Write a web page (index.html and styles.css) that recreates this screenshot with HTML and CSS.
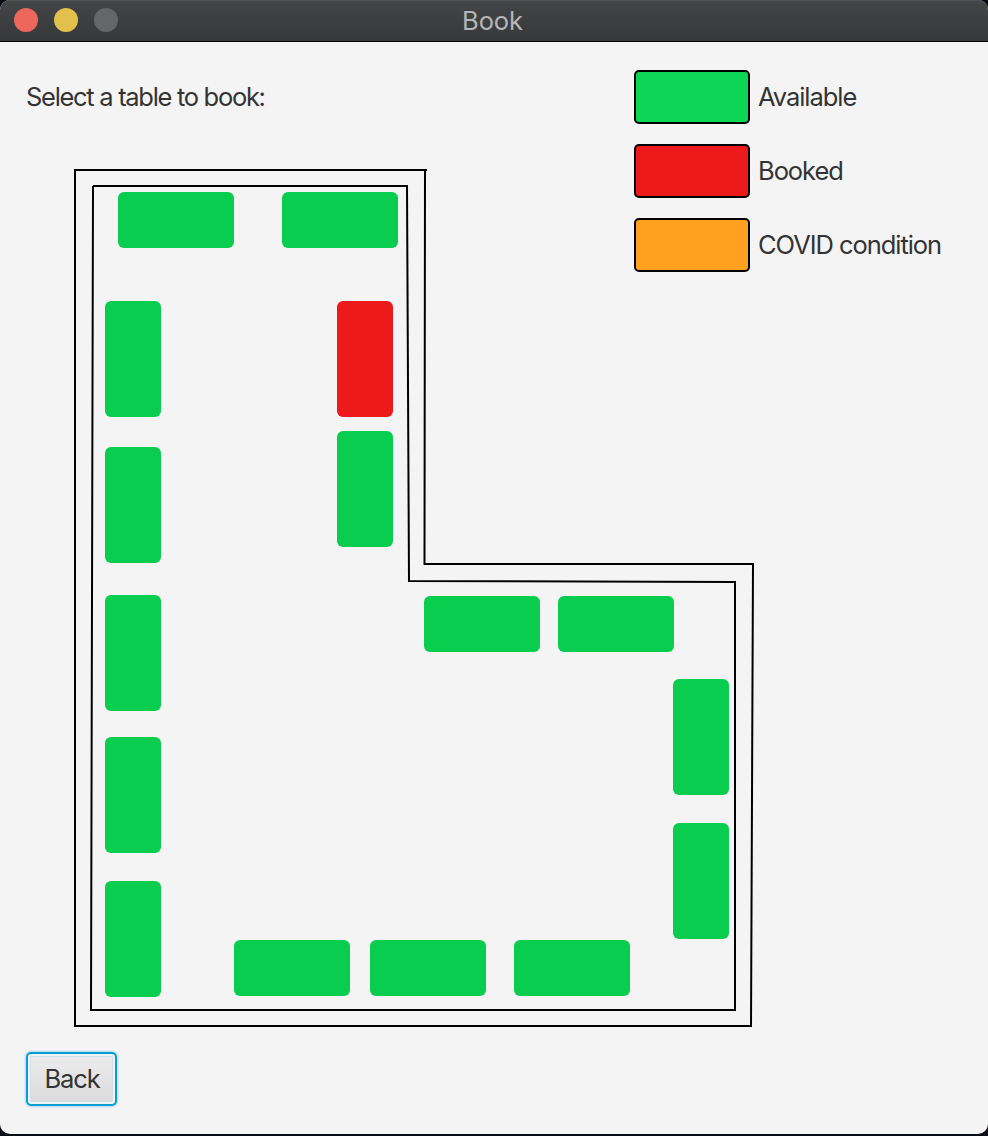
FILE: index.html
```html
<!DOCTYPE html>
<html lang="en">
<head>
<meta charset="utf-8">
<title>Book</title>
<link rel="stylesheet" href="styles.css">
</head>
<body>
<div class="window">
  <header class="titlebar">
    <div class="controls"><span class="dot close"></span><span class="dot minimize"></span><span class="dot zoom"></span></div>
    <h1 class="title">Book</h1>
  </header>
  <main class="content">
    <div class="top">
      <p class="prompt">Select a table to book:</p>
      <ul class="legend">
        <li><span class="swatch available"></span><span class="label">Available</span></li>
        <li><span class="swatch booked"></span><span class="label">Booked</span></li>
        <li><span class="swatch covid"></span><span class="label">COVID condition</span></li>
      </ul>
    </div>
    <svg class="plan" viewBox="70 160 690 872" width="690" height="872">
      <g class="walls">
        <path d="M75 170H427M425 170L424.500 564L753 564L751 1027M752 1026H75M75 1027V169"/>
        <path d="M93 186H407L409 581L735 582V1010H91L93 186"/>
      </g>
      <g class="tables">
        <rect x="118" y="192" width="116" height="56" rx="6"/>
        <rect x="282" y="192" width="116" height="56" rx="6"/>
        <rect x="105" y="301" width="56" height="116" rx="6"/>
        <rect class="taken" x="337" y="301" width="56" height="116" rx="6"/>
        <rect x="337" y="431" width="56" height="116" rx="6"/>
        <rect x="105" y="447" width="56" height="116" rx="6"/>
        <rect x="105" y="595" width="56" height="116" rx="6"/>
        <rect x="424" y="596" width="116" height="56" rx="6"/>
        <rect x="558" y="596" width="116" height="56" rx="6"/>
        <rect x="673" y="679" width="56" height="116" rx="6"/>
        <rect x="105" y="737" width="56" height="116" rx="6"/>
        <rect x="673" y="823" width="56" height="116" rx="6"/>
        <rect x="105" y="881" width="56" height="116" rx="6"/>
        <rect x="234" y="940" width="116" height="56" rx="6"/>
        <rect x="370" y="940" width="116" height="56" rx="6"/>
        <rect x="514" y="940" width="116" height="56" rx="6"/>
      </g>
    </svg>
    <button class="back" type="button"><span>Back</span></button>
  </main>
</div>
</body>
</html>
```

FILE: styles.css
```css
* { box-sizing: border-box; }
body {
  margin: 0;
  background: #0b0d14;
  font-family: Inter, "Liberation Sans", sans-serif;
  font-size: 25.5px;
  color: #333;
}
.window {
  height: 1134px;
  border-radius: 10px;
  overflow: hidden;
  background: #f4f4f4;
}
.titlebar {
  display: grid;
  grid-template-columns: 1fr auto 1fr;
  align-items: center;
  height: 42px;
  padding: 0 3px 1px 14px;
  border-bottom: 1px solid #000;
  background: linear-gradient(#444547, #373839);
  box-shadow: inset 0 1px #505153;
}
.controls { display: flex; gap: 16px; }
.dot { width: 24px; height: 24px; border-radius: 50%; }
.close { background: #ee675c; }
.minimize { background: #e1c04c; }
.zoom { background: #656668; }
.title {
  margin: 0 0 0 -14px;
  padding-top: 2px;
  font-size: 25.5px;
  font-weight: 400;
  line-height: 38px;
  letter-spacing: -0.1px;
  color: #b5b6b7;
}
.content { display: flex; flex-direction: column; align-items: flex-start; }
.top {
  display: flex;
  justify-content: space-between;
  width: 100%;
  height: 118px;
  padding: 28px 0 0 26px;
}
.prompt { margin: 0; line-height: 54px; letter-spacing: -1.3px; }
.legend {
  display: flex;
  flex-direction: column;
  gap: 20px;
  width: 354px;
  margin: 0;
  padding: 0;
  list-style: none;
}
.legend li { display: flex; align-items: center; gap: 8px; height: 54px; white-space: nowrap; letter-spacing: -1.05px; }
.label { padding-bottom: 2px; }
.swatch { width: 116px; height: 54px; border: 2px solid #000; border-radius: 5px; flex: none; }
.available { background: #0dd656; }
.booked { background: #ec1a1a; }
.covid { background: #ffa01f; }
.plan { display: block; margin-left: 70px; }
.walls { fill: none; stroke: #000; stroke-width: 2; }
.tables { fill: #09cd4e; }
.tables .taken { fill: #ec1a1a; }
.back {
  width: 91px;
  height: 54px;
  margin: 20px 0 0 26px;
  padding: 0 0 1px 1px;
  border: 2px solid #039ed3;
  border-radius: 5px;
  background: linear-gradient(#ededed, #dadada);
  box-shadow: 0 0 0 1.5px #c4e4ef, inset 0 0 0 2px #f0f2f3, inset 0 0 0 3px #cce0e6;
  font: inherit;
  color: #333;
  letter-spacing: -1.1px;
}
```
